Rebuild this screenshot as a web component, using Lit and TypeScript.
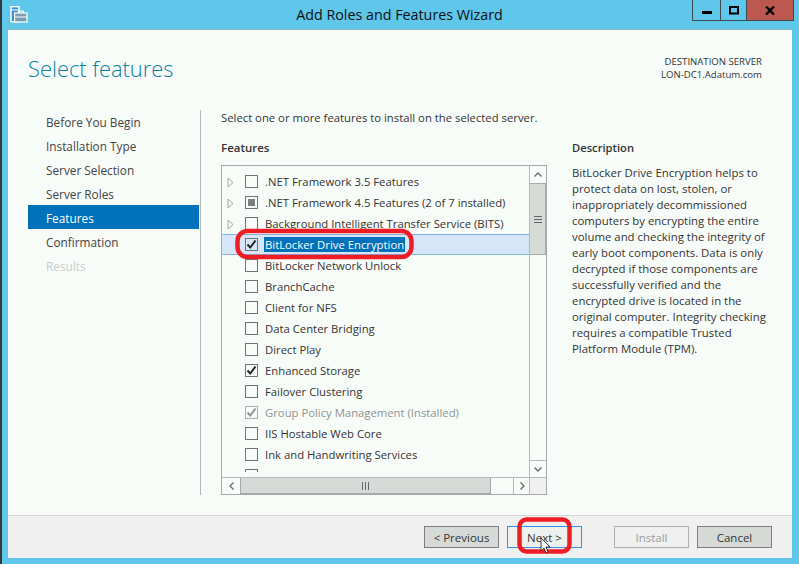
import { LitElement, html, css, svg } from "lit";
import { customElement } from "lit/decorators.js";

type Feature = { label: string; state?: "none" | "check" | "partial" | "grey"; arrow?: boolean; selected?: boolean; grey?: boolean };

const FEATURES: Feature[] = [
  { label: ".NET Framework 3.5 Features", arrow: true },
  { label: ".NET Framework 4.5 Features (2 of 7 installed)", arrow: true, state: "partial" },
  { label: "Background Intelligent Transfer Service (BITS)", arrow: true },
  { label: "BitLocker Drive Encryption", state: "check", selected: true },
  { label: "BitLocker Network Unlock" },
  { label: "BranchCache" },
  { label: "Client for NFS" },
  { label: "Data Center Bridging" },
  { label: "Direct Play" },
  { label: "Enhanced Storage", state: "check" },
  { label: "Failover Clustering" },
  { label: "Group Policy Management (Installed)", state: "grey", grey: true },
  { label: "IIS Hostable Web Core" },
  { label: "Ink and Handwriting Services" },
  { label: "Internet Printing Client" },
];

const STEPS = ["Before You Begin", "Installation Type", "Server Selection", "Server Roles", "Features", "Confirmation", "Results"];

@customElement("app-root")
export class AppRoot extends LitElement {
  static styles = css`
    :host {
      display: block;
      position: relative;
      width: 799px;
      height: 564px;
      overflow: hidden;
      background: #5fc7ea;
      font-family: "Open Sans", "Noto Sans", sans-serif;
      font-size: 11.3px;
      color: #333;
      box-sizing: border-box;
      border-left: 2px solid #333a3e;
    }
    * { box-sizing: border-box; }
    .titlebar { height: 30px; display: flex; position: relative; align-items: flex-start; }
    .appicon { margin: 5px 0 0 8px; width: 18px; height: 18px; flex: none; }
    .title { position: absolute; left: 0; right: 2px; top: 5px; text-align: center; font-size: 14.3px; line-height: 20px; color: #111; }
    .winbtns { margin-left: auto; margin-right: 5px; display: flex; height: 21px; border: 1px solid #3c4a52; border-top: none; position: relative; }
    .winbtn { display: flex; align-items: center; justify-content: center; width: 28px; border-right: 1px solid #3c4a52; }
    .winbtn.max { width: 26px; }
    .winbtn.close { width: 46px; background: #bd5850; border-right: none; }
    .window { margin: 0 7px 0 6px; height: 528px; display: flex; flex-direction: column; background: #f8fcf9; box-shadow: 0 -1px 0 #8fb4c4; }
    .head { height: 80px; display: flex; justify-content: space-between; padding: 23px 30px 0 20px; flex: none; }
    h1 { margin: 0; font-weight: 300; font-size: 21.9px; line-height: 32px; color: #0a7ea4; }
    .dest { text-align: right; font-size: 9.6px; line-height: 13px; color: #333; padding-top: 2px; }
    .main { flex: 1; display: flex; min-height: 0; }
    .steps { width: 172px; margin-left: 20px; margin-top: -1px; padding-right: 1px; display: flex; flex-direction: column; flex: none; }
    .step { height: 24px; line-height: 24px; padding: 1px 0 0 18px; color: #444; font-size: 11.8px; }
    .step.on { background: #0071bb; color: #fff; }
    .step.off { color: #c8cccb; }
    .content { width: 572px; margin-bottom: 20px; border-left: 1px solid #b4b8b6; padding: 0 0 0 20px; display: flex; gap: 25px; }
    .left { width: 326px; flex: none; display: flex; flex-direction: column; }
    .lead { height: 30px; line-height: 16px; white-space: nowrap; width: 340px; }
    .label { font-weight: 600; line-height: 16px; height: 25px; font-size: 11.5px; }
    .list { width: 326px; height: 330px; border: 1px solid #a6aaa8; position: relative; overflow: hidden; }
    .rows { position: absolute; left: 0; top: 5px; width: 308px; height: 301px; overflow: hidden; }
    .row { height: 21px; display: flex; align-items: center; position: relative; border: 1px solid transparent; }
    .row.sel { background: #d6e5f7; border-color: #84b2df; border-left-color: transparent; border-right-color: transparent; }
    .row .arrow { position: absolute; left: 4px; top: 5px; width: 7px; height: 11px; }
    .box { width: 13px; height: 13px; flex: none; border: 1px solid #6f7371; margin-left: 22px; display: flex; align-items: center; justify-content: center; }
    .box.grey { border-color: #a9adab; }
    .box svg { display: block; }
    .inner { width: 7px; height: 7px; background: #7a7e7c; }
    .txt { margin-left: 7px; white-space: nowrap; line-height: 15px; color: #333; }
    .txt.grey { color: #8f9391; }
    .txt.sel { background: #0071bb; color: #fff; padding: 0 1px; margin-left: 6px; }
    .vbar { position: absolute; right: 0; top: 0; width: 17px; height: 311px; border-left: 1px solid #b5b9b7; background: #f8fcf9; display: flex; flex-direction: column; }
    .sbtn { height: 17px; display: flex; align-items: center; justify-content: center; flex: none; }
    .sbtn.dn { border-top: 1px solid #b5b9b7; }
    .vthumb { height: 72px; background: #d7dbd8; border: 1px solid #a6aaa8; border-left-width: 0; display: flex; align-items: center; justify-content: center; }
    .vtrack { flex: 1; }
    .hbar { position: absolute; left: 0; bottom: 0; width: 308px; height: 17px; border-top: 1px solid #b5b9b7; display: flex; background: #f8fcf9; }
    .hbtn { width: 18px; display: flex; align-items: center; justify-content: center; flex: none; }
    .hbtn.r { border-left: 1px solid #b5b9b7; width: 17px; margin-left: 22px; }
    .hthumb { width: 251px; background: #d7dbd8; border: 1px solid #a6aaa8; border-top-width: 0; display: flex; align-items: center; justify-content: center; }
    .corner { position: absolute; right: 0; bottom: 0; width: 17px; height: 17px; background: #eff0ef; border-left: 1px solid #b5b9b7; border-top: 1px solid #b5b9b7; }
    .right { width: 200px; padding-top: 30px; flex: none; }
    .desc-label { font-weight: 600; height: 25px; line-height: 16px; font-size: 11.2px; }
    .desc { line-height: 16px; font-size: 11.4px; margin: 0; width: 200px; }
    .footer { height: 43px; flex: none; background: #f0f0f0; border-top: 1px solid #d4d6d5; display: flex; align-items: center; padding-left: 416px; }
    .btn { width: 75px; height: 22px; border: 1px solid #7d7f7e; background: #d6dad7; display: flex; align-items: center; justify-content: center; font-size: 11.5px; color: #333; font-family: inherit; padding: 0; }
    .btn.focus { border-color: #2f8fe5; background: #eef0ee; margin-left: 8px; }
    .btn.dis { border-color: #adb0ae; background: #f0f0f0; color: #9a9d9b; margin-left: 32px; }
    .btn.cancel { margin-left: 8px; }
    .annot { position: absolute; left: -2px; top: 0; width: 799px; height: 564px; pointer-events: none; }
  `;

  private box(f: Feature) {
    const s = f.state ?? "none";
    const tick = (c: string) => html`<svg width="11" height="11" viewBox="0 0 11 11"><path d="M1.5 5.5 L4.2 8.5 L9.5 1.5" fill="none" stroke=${c} stroke-width="2"/></svg>`;
    return html`<span class="box ${s === "grey" ? "grey" : ""}">
      ${s === "check" ? tick("#222") : s === "grey" ? tick("#8f9391") : s === "partial" ? html`<span class="inner"></span>` : ""}
    </span>`;
  }

  render() {
    return html`
      <div class="titlebar">
        <svg class="appicon" viewBox="0 0 18 18">
          <rect x="1" y="1.7" width="8" height="15" fill="#3f8fd8" stroke="#fff" stroke-width="1.4"/>
          <path d="M1 5 H9" stroke="#fff"/>
          <rect x="4.6" y="8" width="12.4" height="9" fill="#7c9cb0" stroke="#fff" stroke-width="1.2"/>
          <path d="M8.5 8 V6 H13.5 V8 M4.6 12 H17" fill="none" stroke="#fff"/>
        </svg>
        <div class="title">Add Roles and Features Wizard</div>
        <div class="winbtns">
          <div class="winbtn"><svg width="10" height="10" viewBox="0 0 10 10"><rect x="0" y="6" width="10" height="3" fill="#000"/></svg></div>
          <div class="winbtn max"><svg width="10" height="9" viewBox="0 0 10 9"><rect x="1" y="1" width="8" height="6.5" fill="none" stroke="#000" stroke-width="2"/></svg></div>
          <div class="winbtn close"><svg width="10" height="9" viewBox="0 0 10 9"><path d="M1 .5 L9 8.5 M9 .5 L1 8.5" stroke="#000" stroke-width="2.4"/></svg></div>
        </div>
      </div>
      <div class="window">
        <div class="head">
          <h1>Select features</h1>
          <div class="dest">DESTINATION SERVER<br />LON-DC1.Adatum.com</div>
        </div>
        <div class="main">
          <div class="steps">
            ${STEPS.map((s) => html`<div class="step ${s === "Features" ? "on" : ""} ${s === "Results" ? "off" : ""}">${s}</div>`)}
          </div>
          <div class="content">
            <div class="left">
              <div class="lead">Select one or more features to install on the selected server.</div>
              <div class="label">Features</div>
              <div class="list">
                <div class="rows">
                  ${FEATURES.map(
                    (f) => html`<div class="row ${f.selected ? "sel" : ""}">
                      ${f.arrow ? html`<svg class="arrow" viewBox="0 0 7 11"><path d="M1 1 L6 5.5 L1 10 Z" fill="none" stroke="#a4a8a6"/></svg>` : ""}
                      ${this.box(f)}
                      <span class="txt ${f.grey ? "grey" : ""} ${f.selected ? "sel" : ""}">${f.label}</span>
                    </div>`
                  )}
                </div>
                <div class="vbar">
                  <div class="sbtn"><svg width="8" height="5" viewBox="0 0 8 5"><path d="M.5 4.5 L4 1 L7.5 4.5" fill="none" stroke="#666" stroke-width="1.3"/></svg></div>
                  <div class="vthumb"><svg width="8" height="7" viewBox="0 0 8 7"><path d="M0 .5H8M0 3.5H8M0 6.5H8" stroke="#666"/></svg></div>
                  <div class="vtrack"></div>
                  <div class="sbtn dn"><svg width="8" height="5" viewBox="0 0 8 5"><path d="M.5 .5 L4 4 L7.5 .5" fill="none" stroke="#666" stroke-width="1.3"/></svg></div>
                </div>
                <div class="hbar">
                  <div class="hbtn"><svg width="5" height="8" viewBox="0 0 5 8"><path d="M4.5 .5 L1 4 L4.5 7.5" fill="none" stroke="#666" stroke-width="1.3"/></svg></div>
                  <div class="hthumb"><svg width="7" height="8" viewBox="0 0 7 8"><path d="M.5 0V8M3.5 0V8M6.5 0V8" stroke="#666"/></svg></div>
                  <div class="hbtn r"><svg width="5" height="8" viewBox="0 0 5 8"><path d="M.5 .5 L4 4 L.5 7.5" fill="none" stroke="#666" stroke-width="1.3"/></svg></div>
                </div>
                <div class="corner"></div>
              </div>
            </div>
            <div class="right">
              <div class="desc-label">Description</div>
              <p class="desc">BitLocker Drive Encryption helps to protect data on lost, stolen, or inappropriately decommissioned computers by encrypting the entire volume and checking the integrity of early boot components. Data is only decrypted if those components are successfully verified and the encrypted drive is located in the original computer. Integrity checking requires a compatible Trusted Platform Module (TPM).</p>
            </div>
          </div>
        </div>
        <div class="footer">
          <button class="btn">&lt; Previous</button>
          <button class="btn focus">Next &gt;</button>
          <button class="btn dis">Install</button>
          <button class="btn cancel">Cancel</button>
        </div>
      </div>
      <svg class="annot" viewBox="0 0 799 564">
        ${svg`<rect x="237.5" y="231" width="174" height="26" rx="10" fill="none" stroke="#ee1c25" stroke-width="4.5"/>
        <rect x="519.5" y="519.5" width="50" height="32" rx="7" fill="none" stroke="#ee1c25" stroke-width="4.5"/>
        <path d="M541 538 V551 L544 548 L546 553 L548 552 L546 547 L550 547 Z" fill="#fff" stroke="#111" stroke-width=".8"/>`}
      </svg>
    `;
  }
}
